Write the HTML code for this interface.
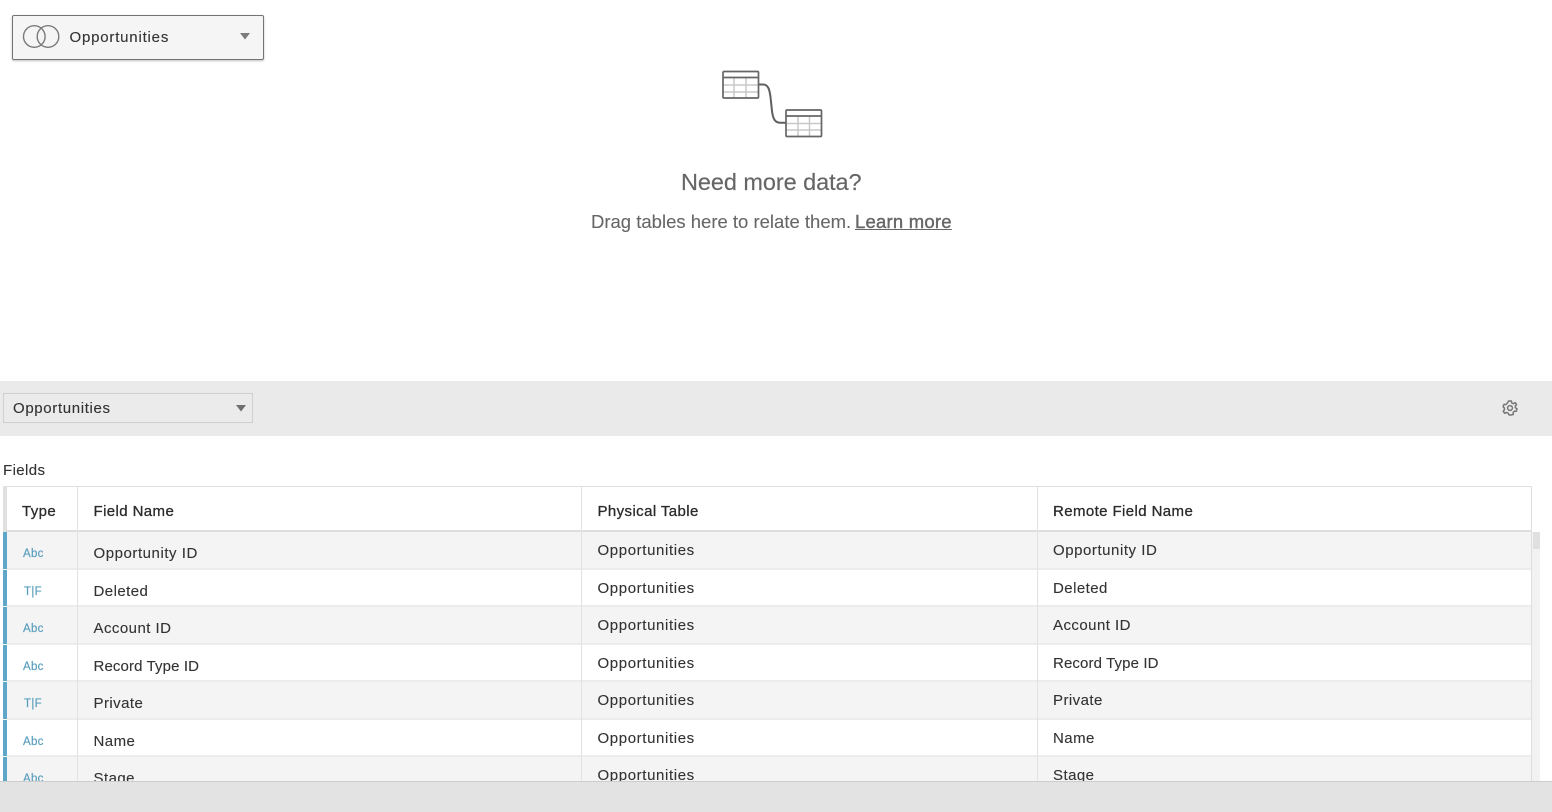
<!DOCTYPE html>
<html><head><meta charset="utf-8"><style>
html,body{margin:0;padding:0;background:#fff}
#p{position:relative;width:1552px;height:812px;overflow:hidden;background:#fff;font-family:"Liberation Sans",sans-serif;color:#333}
#p div{position:absolute;white-space:nowrap}
.t{font-size:15px;letter-spacing:.45px;line-height:20px;height:20px;color:#333;-webkit-text-stroke:.12px #333}
.o{letter-spacing:.62px}
.oi{letter-spacing:.55px}
.rt{letter-spacing:.12px}
.h{color:#2b2b2b;letter-spacing:.4px;-webkit-text-stroke:.3px #2b2b2b}
.ic{font-size:11.5px;color:#5b9fbf;letter-spacing:.3px;line-height:14px;-webkit-text-stroke:.2px #5b9fbf}
.r{left:7px;width:1525px;border-bottom:2px solid #ececec;box-sizing:border-box}
.b{left:3px;width:4px;background:#5fa7c9}
</style></head><body><div id="p">

<!-- top pill -->
<div style="left:12px;top:15px;width:252px;height:45px;box-sizing:border-box;background:#f5f5f5;border:1.5px solid #747474;border-radius:2px;box-shadow:0 1px 2px rgba(0,0,0,.25)"></div>
<svg style="position:absolute;left:22px;top:24px" width="38" height="25" fill="none" stroke="#7a7a7a" stroke-width="1.4"><circle cx="12.3" cy="12.500" r="10.800"/><circle cx="26" cy="12.500" r="10.800"/></svg>
<div class="t o" style="left:69.500px;top:28px;letter-spacing:.8px">Opportunities</div>
<svg style="position:absolute;left:239px;top:32px" width="12" height="8"><path d="M1 1H11L6 7.500Z" fill="#7b7b7b"/></svg>

<!-- tables icon -->
<svg style="position:absolute;left:720px;top:69px" width="104" height="70" fill="none">
<path d="M39 15.500H43C48 15.500 49.500 20 50.500 28L52 42C53 50 55 53.700 60 53.700H66" stroke="#5f5f5f" stroke-width="2"/>
<g stroke="#c8c8c8" stroke-width="1.500"><path d="M3 16H38M3 23H38M14 9V29M26 9V29"/><path d="M66 54.500H101M66 61H101M78 47V67M89.500 47V67"/></g>
<rect x="3" y="2.500" width="35.500" height="26.500" rx="1" stroke="#666" stroke-width="1.700"/><path d="M3 8.500H38" stroke="#666" stroke-width="1.700"/>
<rect x="66" y="41" width="35.500" height="26.500" rx="1" stroke="#666" stroke-width="1.700"/><path d="M66 47H101" stroke="#666" stroke-width="1.700"/>
</svg>

<div style="left:681px;top:167px;font-size:23.500px;line-height:30px;letter-spacing:-.07px;color:#666;-webkit-text-stroke:.15px #666">Need more data?</div>
<div style="left:591px;top:210px;font-size:18.500px;line-height:24px;color:#666;letter-spacing:0;-webkit-text-stroke:.1px #666">Drag tables here to relate them.</div>
<div style="left:855px;top:210px;font-size:18.500px;line-height:24px;color:#666;text-decoration:underline;-webkit-text-stroke:.4px #666;letter-spacing:.22px">Learn more</div>

<!-- bar -->
<div style="left:0;top:381px;width:1552px;height:55px;background:#eaeaea"></div>
<div style="left:3px;top:393px;width:250px;height:30px;box-sizing:border-box;border:1px solid #cfcfcf;background:#ebebeb"></div>
<div class="t o" style="left:13px;top:399px;letter-spacing:.65px">Opportunities</div>
<svg style="position:absolute;left:235px;top:404px" width="12" height="8"><path d="M1 1H11L6 7.500Z" fill="#6f6f6f"/></svg>
<svg style="position:absolute;left:1501px;top:399px" width="18" height="18" viewBox="0 0 18 18" fill="none" stroke="#777" stroke-width="1.500"><path d="M7.600 2H10.400L10.800 4L12.400 4.700L14.200 3.600L15.600 5.600L14.200 7.100L14.500 8.900L16 9.800L15.300 12.300L13.300 12.200L12.100 13.500L12.300 15.500L9.900 16H8.100L7.200 14.200L5.500 13.500L3.600 14.300L2.300 12.200L3.500 10.600L3.300 8.800L2 7.700L3 5.400L5 5.500L6.300 4.100Z" stroke-linejoin="round"/><circle cx="9" cy="9" r="2.400"/></svg>

<div class="t" style="left:3px;top:461px;letter-spacing:.4px">Fields</div>

<!-- table rows -->
<div class="r" style="top:532px;height:38px;background:#f4f4f4"></div>
<div class="r" style="top:570px;height:37px;background:#fff"></div>
<div class="r" style="top:607px;height:38px;background:#f4f4f4"></div>
<div class="r" style="top:645px;height:37px;background:#fff"></div>
<div class="r" style="top:682px;height:38px;background:#f4f4f4"></div>
<div class="r" style="top:720px;height:37px;background:#fff"></div>
<div class="r" style="top:757px;height:38px;background:#f4f4f4"></div>

<!-- header -->
<div style="left:3px;top:486px;width:1529px;height:46px;box-sizing:border-box;border-top:1px solid #e0e0e0;border-bottom:2px solid #dedede;border-left:4px solid #e0e0e0;background:#fff"></div>
<div style="left:3px;top:532px;width:4px;height:38px;background:#5fa7c9;border-bottom:1px solid #fff;box-sizing:border-box"></div>
<div class="b" style="top:570px;height:36px"></div>
<div class="b" style="top:607px;height:37px"></div>
<div class="b" style="top:645px;height:36px"></div>
<div class="b" style="top:682px;height:37px"></div>
<div class="b" style="top:720px;height:36px"></div>
<div class="b" style="top:757px;height:30px"></div>

<div style="left:77px;top:487px;width:1px;height:300px;background:#e2e2e2"></div>
<div style="left:581px;top:487px;width:1px;height:300px;background:#e2e2e2"></div>
<div style="left:1037px;top:487px;width:1px;height:300px;background:#e2e2e2"></div>
<div style="left:1531px;top:487px;width:1px;height:300px;background:#dedede"></div>
<div style="left:1532px;top:532px;width:8px;height:255px;background:#f2f2f2"></div>
<div style="left:1533px;top:532px;width:7px;height:17px;background:#e0e0e0"></div>

<div class="t h" style="left:22px;top:502px">Type</div>
<div class="t h" style="left:93.500px;top:502px">Field Name</div>
<div class="t h" style="left:597.500px;top:502px">Physical Table</div>
<div class="t h" style="left:1053px;top:502px">Remote Field Name</div>

<div class="ic" style="left:23px;top:547px">Abc</div>
<div class="ic" style="left:24px;top:585px">T|F</div>
<div class="ic" style="left:23px;top:622px">Abc</div>
<div class="ic" style="left:23px;top:660px">Abc</div>
<div class="ic" style="left:24px;top:697px">T|F</div>
<div class="ic" style="left:23px;top:735px">Abc</div>
<div class="ic" style="left:23px;top:772px">Abc</div>

<div class="t oi" style="left:93.500px;top:544px">Opportunity ID</div>
<div class="t" style="left:93.500px;top:582px">Deleted</div>
<div class="t" style="left:93.500px;top:619px">Account ID</div>
<div class="t rt" style="left:93.500px;top:657px">Record Type ID</div>
<div class="t" style="left:93.500px;top:694px">Private</div>
<div class="t" style="left:93.500px;top:732px">Name</div>
<div class="t" style="left:93.500px;top:769px">Stage</div>

<div class="t o" style="left:597.500px;top:541px">Opportunities</div>
<div class="t o" style="left:597.500px;top:579px">Opportunities</div>
<div class="t o" style="left:597.500px;top:616px">Opportunities</div>
<div class="t o" style="left:597.500px;top:654px">Opportunities</div>
<div class="t o" style="left:597.500px;top:691px">Opportunities</div>
<div class="t o" style="left:597.500px;top:729px">Opportunities</div>
<div class="t o" style="left:597.500px;top:766px">Opportunities</div>

<div class="t oi" style="left:1053px;top:541px">Opportunity ID</div>
<div class="t" style="left:1053px;top:579px">Deleted</div>
<div class="t" style="left:1053px;top:616px">Account ID</div>
<div class="t rt" style="left:1053px;top:654px">Record Type ID</div>
<div class="t" style="left:1053px;top:691px">Private</div>
<div class="t" style="left:1053px;top:729px">Name</div>
<div class="t" style="left:1053px;top:766px">Stage</div>

<!-- footer -->
<div style="left:0;top:781px;width:1552px;height:31px;background:#e3e3e3;border-top:1px solid #cdcdcd;box-sizing:border-box"></div>
</div></body></html>
